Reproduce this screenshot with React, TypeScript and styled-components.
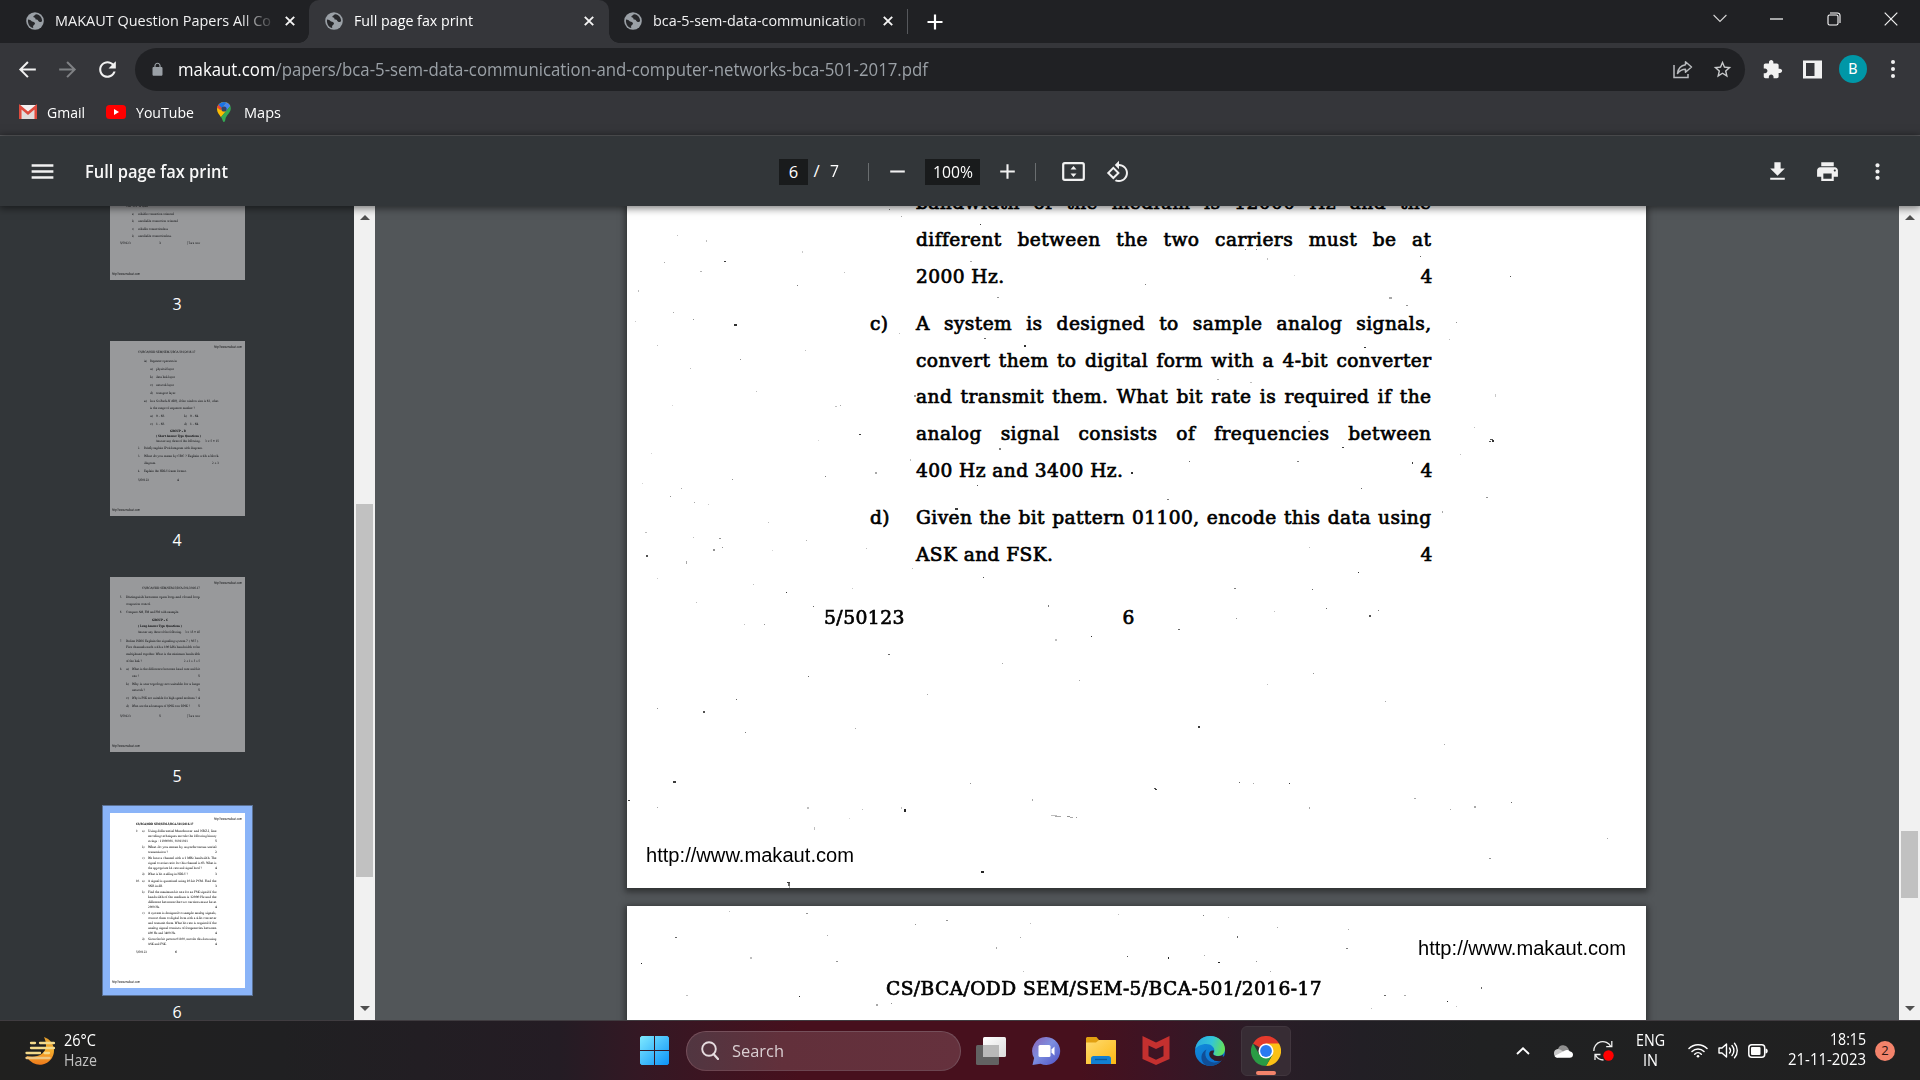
import React, { useLayoutEffect, useRef, useState } from 'react';
import styled, { createGlobalStyle, css } from 'styled-components';

const UI = `"Open Sans", "Noto Sans", sans-serif`;
const BOOK = `"DejaVu Serif", serif`;
const ARIAL = `"Liberation Sans", Arial, sans-serif`;

const Global = createGlobalStyle`
  * { box-sizing: border-box; }
  html, body { margin: 0; padding: 0; background: #202124; overflow: hidden; }
  body { font-family: ${UI}; }
  svg { display: block; flex: none; }
`;

/* ---------- text squeezed or stretched to an exact width ---------- */

const FitBox = styled.span<{ $w: number }>`
  display: block;
  flex: none;
  width: ${(p) => p.$w}px;
  white-space: pre;
`;
const FitInner = styled.span`
  display: inline-block;
  transform-origin: 0 50%;
`;

function Fit({ w, children }: { w: number; children: React.ReactNode }) {
  const ref = useRef<HTMLSpanElement>(null);
  const [scale, setScale] = useState(1);
  useLayoutEffect(() => {
    if (ref.current && ref.current.offsetWidth) {
      const s = getComputedStyle(ref.current).transform;
      const now = s === 'none' ? 1 : new DOMMatrix(s).a;
      setScale(w / (ref.current.getBoundingClientRect().width / now));
    }
  }, [w]);
  return (
    <FitBox $w={w}>
      <FitInner ref={ref} style={{ transform: `scaleX(${scale})` }}>{children}</FitInner>
    </FitBox>
  );
}

/* ---------- window ---------- */

const Screen = styled.div`
  width: 1920px;
  height: 1080px;
  display: flex;
  flex-direction: column;
  overflow: hidden;
  color: #fff;
`;

const TabStrip = styled.div`
  height: 43px;
  background: #202124;
  display: flex;
  flex: none;
  align-items: stretch;
`;
const Tab = styled.div<{ $active?: boolean; $w: number; $pad: number }>`
  width: ${(p) => p.$w}px;
  display: flex;
  align-items: center;
  padding-left: ${(p) => p.$pad}px;
  padding-bottom: 1px;
  font-size: 15px;
  line-height: 24px;
  color: ${(p) => (p.$active ? '#fff' : '#f1f1f2')};
  ${(p) =>
    p.$active &&
    css`
      background: #35363a;
      border-radius: 10px 10px 0 0;
      position: relative;
      &::before, &::after {
        content: '';
        position: absolute;
        bottom: 0;
        width: 10px;
        height: 10px;
      }
      &::before { left: -10px; background: radial-gradient(circle at 0 0, transparent 9.5px, #35363a 10px); }
      &::after { right: -10px; background: radial-gradient(circle at 100% 0, transparent 9.5px, #35363a 10px); }
    `}
`;
const TabText = styled.div<{ $fade?: boolean }>`
  width: 216px;
  margin-left: 11px;
  margin-top: -2px;
  overflow: hidden;
  ${(p) => p.$fade && css`mask-image: linear-gradient(90deg, #000 185px, rgba(0,0,0,0.15) 216px);`}
`;
const TabClose = styled.div`
  margin-left: 14px;
`;
const TabDivider = styled.div`
  width: 1px;
  height: 25px;
  margin: 9px 19px 0 0;
  background: #56585c;
`;
const NewTab = styled.div`
  display: flex;
  align-items: center;
`;
const WindowControls = styled.div`
  margin-left: auto;
  display: flex;
  align-items: center;
  height: 37px;
  gap: 43.5px;
  padding-right: 22px;
`;

const Toolbar = styled.div`
  height: 53px;
  flex: none;
  background: #35363a;
  display: flex;
  align-items: center;
  padding: 0 16px 0 15px;
`;
const NavButtons = styled.div`
  display: flex;
  gap: 15px;
  width: 120px;
  flex: none;
  margin-top: -1px;
`;
const Omnibox = styled.div`
  width: 1610px;
  height: 43px;
  flex: none;
  border-radius: 22px;
  background: #202124;
  display: flex;
  align-items: center;
  padding: 0 12px 0 15px;
  font-size: 17.5px;
  color: #9aa0a6;
`;
const Url = styled.div`
  display: flex;
  margin: -1px 0 0 13px;
  flex: 1;
`;
const Host = styled.span`
  color: #fff;
`;
const OmniActions = styled.div`
  display: flex;
  align-items: center;
  gap: 19px;
`;
const ToolbarRight = styled.div`
  display: flex;
  align-items: center;
  margin-left: 17px;
  margin-top: -1px;
`;
const Avatar = styled.div`
  width: 28px;
  height: 28px;
  border-radius: 50%;
  background: #0097a7;
  display: grid;
  place-items: center;
  font: 15px Roboto, sans-serif;
  margin: 0 24px 0 17px;
`;

const Bookmarks = styled.div`
  height: 40px;
  flex: none;
  background: #35363a;
  border-bottom: 1px solid #5f6063;
  display: flex;
  align-items: center;
  padding: 0 0 7px 18px;
  font-size: 15px;
  line-height: 24px;
`;
const Bookmark = styled.div<{ $gap: number; $next: number }>`
  display: flex;
  align-items: center;
  gap: ${(p) => p.$gap}px;
  margin-right: ${(p) => p.$next}px;
  ${FitBox} { margin-top: -1px; }
`;

/* ---------- PDF viewer ---------- */

const PdfBar = styled.div`
  height: 70px;
  flex: none;
  background: #323639;
  display: flex;
  align-items: center;
  padding: 1px 30px 0 28px;
  font-size: 17px;
  line-height: 26px;
  box-shadow: 0 1px 8px 1px rgba(0, 0, 0, 0.55);
  position: relative;
  z-index: 2;
`;
const PdfTitle = styled.div`
  margin: -1px 0 0 28px;
  font-weight: 600;
  color: #f8f8f8;
  width: 694px;
  font-size: 17.5px;
`;
const Field = styled.div<{ $w: number }>`
  width: ${(p) => p.$w}px;
  height: 26px;
  background: #191b1c;
  display: flex;
  justify-content: center;
  font-size: 16.5px;
  line-height: 25px;
`;
const Slash = styled.div`
  margin: -1px 10.5px 0 5.5px;
`;
const Total = styled.div`
  margin-top: -1px;
`;
const Rule = styled.div<{ $l: number; $r: number }>`
  width: 1px;
  height: 18px;
  background: #6a6e70;
  margin: 0 ${(p) => p.$r}px 0 ${(p) => p.$l}px;
`;
const PdfActions = styled.div`
  display: flex;
  gap: 25px;
  margin-left: auto;
`;
const Spacer = styled.div<{ $w: number }>`
  width: ${(p) => p.$w}px;
  flex: none;
`;

const PdfBody = styled.div`
  height: 814px;
  flex: none;
  display: flex;
  background: #525659;
`;
const Sidebar = styled.div`
  width: 354px;
  background: #323639;
  overflow: hidden;
  display: flex;
  flex-direction: column;
  align-items: center;
`;
const ThumbItem = styled.div`
  display: flex;
  flex-direction: column;
  align-items: center;
  height: 236px;
  flex: none;
  margin-left: 1px;
  &:first-child { margin-top: -109px; }
`;
const ThumbFrame = styled.div<{ $on?: boolean }>`
  width: 151px;
  height: 191px;
  background: ${(p) => (p.$on ? '#8ab4f8' : 'transparent')};
  border: 1px solid ${(p) => (p.$on ? '#5b7193' : 'transparent')};
  padding: 7px;
`;
const Thumb = styled.div<{ $on?: boolean }>`
  width: 135px;
  height: 175px;
  overflow: hidden;
  background: ${(p) => (p.$on ? '#fff' : '#98999b')};
  color: ${(p) => (p.$on ? '#000' : '#111214')};
  font-family: ${BOOK};
`;
const ThumbLabel = styled.div`
  font-size: 16px;
  line-height: 20px;
  margin: 6px 0 0 -1px;
`;
const MiniRow = styled.div<{ $top: number; $bold?: boolean; $sans?: boolean }>`
  display: flex;
  height: 5px;
  margin-top: ${(p) => p.$top}px;
  font-size: ${(p) => (p.$sans ? 2.6 : 3)}px;
  line-height: 5px;
  font-weight: ${(p) => (p.$bold ? 700 : 400)};
  font-family: ${(p) => (p.$sans ? ARIAL : BOOK)};
  -webkit-text-stroke: ${(p) => (p.$sans ? 0 : 0.03)}px currentColor;
`;
const MiniSeg = styled.div<{ $left: number }>`
  margin-left: ${(p) => p.$left}px;
  flex: none;
`;

const Scrollbar = styled.div`
  width: 21px;
  flex: none;
  background: #f1f1f1;
  display: flex;
  flex-direction: column;
  align-items: center;
  justify-content: space-between;
  padding: 9px 0 9px;
`;
const ScrollTrack = styled.div<{ $before: number; $len: number }>`
  flex: 1;
  width: 17px;
  padding-top: ${(p) => p.$before}px;
  &::before {
    content: '';
    display: block;
    height: ${(p) => p.$len}px;
    background: #c1c1c1;
  }
`;
const ScrollArrow = styled.div<{ $down?: boolean }>`
  border: 5px solid transparent;
  border-top-width: ${(p) => (p.$down ? 5 : 0)}px;
  border-bottom-width: ${(p) => (p.$down ? 0 : 5)}px;
  border-${(p) => (p.$down ? 'top' : 'bottom')}-color: #505050;
`;

const Canvas = styled.div`
  width: 1524px;
  overflow: hidden;
  padding-left: 252px;
`;
const PageShadow = styled.div`
  width: 1019px;
  box-shadow: 0 2px 6px 2px rgba(20, 20, 20, 0.55);
  margin-bottom: 18px;
`;
const Page = styled.div<{ $h: number }>`
  position: relative;
  width: 1019px;
  height: ${(p) => p.$h}px;
  background: #fff;
  color: #000;
  overflow: hidden;
`;
const Specks = styled.svg`
  position: absolute;
  left: 0;
  top: 0;
`;
const printed = css`
  font-family: ${BOOK};
  font-size: 18.6px;
  letter-spacing: 0.42px;
  line-height: 36.7px;
  -webkit-text-stroke: 0.7px #000;
`;
const Questions = styled.div`
  ${printed}
  margin: -20.6px 0 0 243px;
  width: 562px;
  display: flex;
  flex-direction: column;
  gap: 10.6px;
`;
const Question = styled.div`
  display: flex;
`;
const Marker = styled.div`
  width: 46px;
  flex: none;
`;
const Lines = styled.div`
  width: 515.5px;
`;
const Line = styled.div<{ $short?: boolean }>`
  height: 36.7px;
  white-space: nowrap;
  ${(p) =>
    p.$short
      ? css`display: flex; justify-content: space-between; margin-right: -1.2px;`
      : css`text-align: justify; text-align-last: justify;`}
`;
const PageFoot = styled.div`
  ${printed}
  margin: 26.3px 0 0 197px;
  display: flex;
  gap: 217.5px;
`;
const PageUrl = styled.div<{ $top: number; $left: number }>`
  margin: ${(p) => p.$top}px 0 0 ${(p) => p.$left}px;
  font: 20px/24px ${ARIAL};
`;
const PageHeading = styled.div`
  ${printed}
  margin: 10.6px 0 0 259px;
`;

/* ---------- taskbar ---------- */

const Taskbar = styled.div`
  height: 60px;
  flex: none;
  display: flex;
  align-items: center;
  border-top: 1px solid #403c40;
  background: linear-gradient(90deg, #20201f 0, #202022 280px, #241c24 560px, #341824 640px, #47101d 800px,
    #47101d 1080px, #3c1424 1160px, #2a1d27 1260px, #221f25 1360px, #202122 1480px, #202020 1920px);
`;
const Weather = styled.div`
  width: 615px;
  margin-left: 25px;
  display: flex;
  align-items: center;
  gap: 9px;
  font-size: 15.5px;
  line-height: 20px;
`;
const WeatherText = styled.div`
  margin-top: -2px;
`;
const Dim = styled.div`
  color: #c2c2c2;
`;
const SearchBox = styled.div`
  width: 275px;
  height: 40px;
  margin: 0 15px 0 17px;
  border-radius: 20px;
  background: linear-gradient(90deg, #513641, #62303b 35%, #65313d);
  border: 1px solid #75505b;
  border-bottom-color: #6c4550;
  display: flex;
  align-items: center;
  gap: 13px;
  padding-left: 14px;
  font-size: 17px;
  color: #dacfd2;
`;
const Apps = styled.div`
  display: flex;
  align-items: center;
  gap: 25.6px;
`;
const ActiveApp = styled.div`
  width: 50px;
  height: 50px;
  margin-left: -10px;
  border-radius: 6px;
  background: #372c34;
  border: 1px solid #41363e;
  display: flex;
  flex-direction: column;
  align-items: center;
  padding-top: 9px;
  gap: 5px;
`;
const ActiveBar = styled.div`
  width: 20px;
  height: 4px;
  flex: none;
  border-radius: 2px;
  background: #f3836b;
`;
const Tray = styled.div`
  margin-left: auto;
  display: flex;
  align-items: center;
  padding-right: 25px;
  font-size: 15.5px;
  line-height: 20px;
`;
const TrayIcon = styled.div<{ $r: number }>`
  margin-right: ${(p) => p.$r}px;
`;
const Language = styled.div`
  width: 30px;
  margin: -1px 23px 0 -1px;
  display: flex;
  flex-direction: column;
  align-items: center;
`;
const Clock = styled.div`
  display: flex;
  flex-direction: column;
  align-items: flex-end;
  margin: -3px 9px 0 20px;
`;
const Badge = styled.div`
  width: 20px;
  height: 20px;
  border-radius: 50%;
  background: #f3836b;
  color: #2b1512;
  font-size: 13px;
  line-height: 18px;
  text-align: center;
`;

/* ---------- icons ---------- */

function Glyph({ d, size = 25, color = '#f1f1f1' }: { d: string; size?: number; color?: string }) {
  return (
    <svg width={size} height={size} viewBox="0 0 24 24" fill={color}><path d={d} /></svg>
  );
}
const P = {
  back: 'M20 11.1H7.4l5.7-5.7L11.7 4 3.8 12l7.9 8 1.4-1.4-5.7-5.7H20z',
  fwd: 'M4 11.1h12.6l-5.7-5.7L12.3 4l7.9 8-7.9 8-1.4-1.4 5.7-5.7H4z',
  reload: 'M17.65 6.35C16.2 4.9 14.21 4 12 4c-4.42 0-7.99 3.58-7.99 8s3.57 8 7.99 8c3.73 0 6.84-2.55 7.73-6h-2.08c-.82 2.33-3.04 4-5.65 4-3.31 0-6-2.69-6-6s2.69-6 6-6c1.66 0 3.14.69 4.22 1.78L13 11h7V4l-2.35 2.35z',
  lock: 'M18 8h-1V6c0-2.76-2.24-5-5-5S7 3.24 7 6v2H6c-1.1 0-2 .9-2 2v10c0 1.1.9 2 2 2h12c1.1 0 2-.9 2-2V10c0-1.1-.9-2-2-2zM8.9 6c0-1.71 1.39-3.1 3.1-3.1s3.1 1.39 3.1 3.1v2H8.9V6z',
  star: 'M22 9.24l-7.19-.62L12 2 9.19 8.63 2 9.24l5.46 4.73L5.82 21 12 17.27 18.18 21l-1.63-7.03L22 9.24zM12 15.4l-3.76 2.27 1-4.28-3.32-2.88 4.38-.38L12 6.1l1.71 4.04 4.38.38-3.32 2.88 1 4.28L12 15.4z',
  puzzle: 'M20.5 11H19V7c0-1.1-.9-2-2-2h-4V3.5C13 2.12 11.88 1 10.5 1S8 2.12 8 3.5V5H4c-1.1 0-1.99.9-1.99 2v3.8H3.5c1.49 0 2.7 1.21 2.7 2.7s-1.21 2.7-2.7 2.7H2V20c0 1.1.9 2 2 2h3.8v-1.5c0-1.49 1.21-2.7 2.7-2.7 1.49 0 2.7 1.21 2.7 2.7V22H17c1.1 0 2-.9 2-2v-4h1.5c1.38 0 2.5-1.12 2.5-2.5S21.88 11 20.5 11z',
  dots: 'M12 8c1.1 0 2-.9 2-2s-.9-2-2-2-2 .9-2 2 .9 2 2 2zm0 2c-1.1 0-2 .9-2 2s.9 2 2 2 2-.9 2-2-.9-2-2-2zm0 6c-1.1 0-2 .9-2 2s.9 2 2 2 2-.9 2-2-.9-2-2-2z',
  menu: 'M3 18h18v-2H3v2zm0-5h18v-2H3v2zm0-7v2h18V6H3z',
  download: 'M5 20h14v-2H5v2zM19 9h-4V3H9v6H5l7 7 7-7z',
  print: 'M19 8H5c-1.66 0-3 1.34-3 3v6h4v4h12v-4h4v-6c0-1.66-1.34-3-3-3zm-3 11H8v-5h8v5zm3-7c-.55 0-1-.45-1-1s.45-1 1-1 1 .45 1 1-.45 1-1 1zm-1-9H6v4h12V3z',
  add: 'M19 13h-6v6h-2v-6H5v-2h6V5h2v6h6v2z',
  remove: 'M19 13H5v-2h14v2z',
  rotate: 'M7.34 6.41L.86 12.9l6.49 6.48 6.49-6.48-6.5-6.49zM3.69 12.9l3.66-3.66L11 12.9l-3.66 3.66-3.65-3.66zm15.67-6.26C17.61 4.88 15.3 4 13 4V.76L8.76 5 13 9.24V6c1.79 0 3.58.68 4.95 2.05 2.73 2.73 2.73 7.17 0 9.9C16.58 19.32 14.79 20 13 20c-.97 0-1.94-.21-2.84-.61l-1.49 1.49C10.02 21.62 11.51 22 13 22c2.3 0 4.61-.88 6.36-2.64 3.52-3.51 3.52-9.21 0-12.72z',
};

const Globe = () => (
  <svg width="18" height="18" viewBox="0 0 18 18">
    <circle cx="9" cy="9" r="8.8" fill="#9aa0a6" />
    <path d="M10.5 2.2c-1.5.3-1.8 1.3-3 1.9-.3 1 .2 1.5 1.6 1.6l.6 1.8c1.4.2 2.3.2 2.6 1.5l1.3 1c1.3.2 2.3-.2 2.500-1.300-.1-3-2.200-5.900-5.600-6.500zM2 7.400c1.700.1 3 .7 4 2 1.800.1 2.900.9 3 2.200-.4 1.500-1.800 1.600-2 3.100l.3 1.300C4.300 15.600 1.400 12 2 7.400z" fill="#26272a" />
  </svg>
);
const Cross = ({ s = 10 }: { s?: number }) => (
  <svg width={s} height={s} viewBox="0 0 10 10"><path d="M.8.8l8.4 8.4M9.2.8L.8 9.2" stroke="#f4f4f4" strokeWidth="1.9" /></svg>
);
const Gmail = () => (
  <svg width="20" height="16" viewBox="0 0 20 16">
    <rect x="1" y="1" width="18" height="14" rx="1.5" fill="#f4f1f1" />
    <path d="M4 15V5l6 5 6-5v10z" fill="#e1dcdc" />
    <path d="M2.3 15V2.8L10 9.2l7.7-6.4V15" fill="none" stroke="#dd4b3e" strokeWidth="2.6" />
  </svg>
);
const YouTube = () => (
  <svg width="20" height="14" viewBox="0 0 20 14"><rect width="20" height="14" rx="3.5" fill="#f00" /><path d="M8 4v6l5-3z" fill="#fff" /></svg>
);
const Maps = () => (
  <svg width="14" height="20" viewBox="0 0 14 20">
    <path d="M7 0a7 7 0 0 1 6.3 4L4 15.3C2.3 12.5 0 10.5 0 7a7 7 0 0 1 7-7z" fill="#fbbc04" />
    <path d="M2.2 2A7 7 0 0 1 7 0c1 0 2 .2 2.8.6L4.7 6.5 1 3.4z" fill="#1a73e8" />
    <path d="M1.4 2.8A7 7 0 0 0 .2 5.5l3.2 2.7L5 6z" fill="#ea4335" />
    <path d="M9.8.6a7 7 0 0 1 3.5 3.4L9 9 6.5 4.6z" fill="#4285f4" />
    <path d="M13.3 4c2 5-2.6 7.5-4.4 11.5-.6 1.5-.6 4.5-1.9 4.5s-1.3-2.6-3-5z" fill="#34a853" />
    <circle cx="7" cy="7" r="2.6" fill="#31456b" />
  </svg>
);
const WindowIcons = () => (
  <WindowControls>
    <svg width="14" height="9" viewBox="0 0 14 9"><path d="M.6 1l6.4 6.5L13.4 1" fill="none" stroke="#d6d6d6" strokeWidth="1.1" /></svg>
    <svg width="13" height="2" viewBox="0 0 13 2"><path d="M0 1h13" stroke="#fff" strokeWidth="1.2" /></svg>
    <svg width="14" height="14" viewBox="0 0 14 14" fill="none" stroke="#fff" strokeWidth="1.1">
      <rect x="1" y="3" width="10" height="10" rx="1.6" /><path d="M3 1h7.5A2.5 2.5 0 0 1 13 3.5V11" />
    </svg>
    <svg width="14" height="14" viewBox="0 0 14 14"><path d="M.7.7l12.6 12.6M13.3.7L.7 13.3" stroke="#f2f2f2" strokeWidth="1.2" /></svg>
  </WindowControls>
);
const Share = () => (
  <svg width="20" height="19" viewBox="0 0 20 19" fill="none" stroke="#b9bbbe" strokeWidth="1.5">
    <path d="M1 5v12.5h14V14" /><path d="M12.5 1.8L18.5 7l-6 5.2V9.3c-3.5 0-5.8 1.2-8 4.2.6-4.8 3.5-8 8-8.7z" strokeLinejoin="round" />
  </svg>
);
const SidePanel = () => (
  <svg width="19" height="19" viewBox="0 0 19 19"><path fillRule="evenodd" d="M0 .5h19v18H0zM3 3v13h8.5V3z" fill="#f1f1f1" /></svg>
);
const FitPage = () => (
  <svg width="23" height="19" viewBox="0 0 23 19">
    <rect x="1.2" y="1.2" width="20.6" height="16.6" rx="1.5" fill="none" stroke="#f1f1f1" strokeWidth="2.2" />
    <path d="M8.5 7.6h6L11.5 4zM8.5 11.4h6l-3 3.6z" fill="#f1f1f1" />
  </svg>
);
const Moon = () => (
  <svg width="30" height="28" viewBox="0 0 30 28">
    <defs><linearGradient id="moon" x1="0" y1="0" x2="0" y2="1"><stop offset="0" stopColor="#e09b2d" /><stop offset=".5" stopColor="#f5ac2c" /><stop offset="1" stopColor="#ee7a1c" /></linearGradient></defs>
    <path d="M19 0c6 2 10 7.5 10 13.5A14.3 14.3 0 0 1 1.5 19c9 2.5 19-1 19.5-10 0-3.5-.6-6-2-9z" fill="url(#moon)" />
    <g stroke="#f3d98a" strokeWidth="2.3" strokeLinecap="round">
      <path d="M6 6h4M15 6h14M6 11h23M1.5 16H15M19.5 16H24" /><path d="M1.5 21h23" stroke="#eec782" />
    </g>
  </svg>
);
const WindowsLogo = () => (
  <svg width="29" height="29" viewBox="0 0 29 29">
    <defs><linearGradient id="win" x1="0" y1="0" x2="1" y2="1"><stop offset="0" stopColor="#7feaff" /><stop offset="1" stopColor="#0c93f7" /></linearGradient></defs>
    <path d="M1.5 0H14v14H0V1.5zM15 0h12.5L29 1.5V14H15zM0 15h14v14H1.5L0 27.5zM15 15h14v12.5L27.5 29H15z" fill="url(#win)" />
  </svg>
);
const TaskView = () => (
  <svg width="30" height="28" viewBox="0 0 30 28">
    <defs><linearGradient id="tvw" x1="0" y1="0" x2="1" y2="1"><stop offset="0" stopColor="#fff" /><stop offset="1" stopColor="#dcdcdc" /></linearGradient></defs>
    <rect y="8" width="23" height="20" rx="1.5" fill="#626262" /><rect x="7" width="23" height="20" rx="1.5" fill="url(#tvw)" /><path d="M7 8h16v12H7z" fill="#b9b9b9" />
  </svg>
);
const Chat = () => (
  <svg width="29" height="28" viewBox="0 0 29 28">
    <defs><linearGradient id="cht" x1="0" y1="0" x2="1" y2="1"><stop offset="0" stopColor="#8a5fb4" /><stop offset=".45" stopColor="#7d8fe0" /><stop offset="1" stopColor="#4d4fc4" /></linearGradient></defs>
    <path d="M14.5 0a14 14 0 1 1-6 26.8L.5 28l1.6-7A14 14 0 0 1 14.5 0z" fill="url(#cht)" />
    <rect x="6.5" y="8" width="12" height="12" rx="1.5" fill="#fff" /><path d="M19.5 12.5l3-3v9l-3-3z" fill="#fff" />
  </svg>
);
const Explorer = () => (
  <svg width="30" height="27" viewBox="0 0 30 27">
    <defs><linearGradient id="fld" x1="0" y1="0" x2="1" y2="1"><stop offset="0" stopColor="#ffdb70" /><stop offset="1" stopColor="#fcb813" /></linearGradient></defs>
    <path d="M1 0h9.5L13 3v5H0V1z" fill="#e2a011" /><path d="M0 5.5h10L13 3h16.5l.5.5V27H0z" fill="url(#fld)" />
    <path d="M5 27v-5.5c0-1.5 1-2.5 2.5-2.5h15c1.5 0 2.5 1 2.5 2.5V27z" fill="#1280d2" /><path d="M9 22.5h12" stroke="#0a5a9c" strokeWidth="1.3" />
  </svg>
);
const McAfee = () => (
  <svg width="28" height="29" viewBox="0 0 28 29"><path d="M.5 0L14 6.5 27.5 0v23L14 29 .5 23zM6.5 9.5v10.8l7.5 3.4 7.5-3.4V9.5l-7.5 3.6z" fill="#c4302f" fillRule="evenodd" /></svg>
);
const Edge = () => (
  <svg width="30" height="30" viewBox="0 0 30 30">
    <defs>
      <linearGradient id="edg" x1="0" y1=".2" x2="1" y2=".4"><stop offset="0" stopColor="#2aa9e0" /><stop offset=".55" stopColor="#33c5d8" /><stop offset="1" stopColor="#63e05a" /></linearGradient>
      <linearGradient id="edb" x1="0" y1="0" x2=".6" y2="1"><stop offset="0" stopColor="#1292dc" /><stop offset="1" stopColor="#0c6fd0" /></linearGradient>
    </defs>
    <circle cx="15" cy="15" r="15" fill="url(#edb)" />
    <path d="M19 20.5h11.5v5l-3-1.2-3 1.2-5.5-1z" fill="#331b27" />
    <path d="M.3 13C1.5 5 7.5 0 15 0c8.5 0 15 6 15 13 0 4-2.8 7-7 7-3 0-5-1-4.5-2.2.6-1 .9-1.8.9-3 0-4-3.7-6.8-8-6.8C6 8 2 10.5.3 13z" fill="url(#edg)" />
    <path d="M11.5 13.5c-3 5 0 12.5 7.5 13 3 .2 5.5-.8 7.5-2A15 15 0 0 1 15 30C9 30 6 25 6.5 20.5c.3-3 2-5.5 5-7z" fill="#104e97" />
    <path d="M19 14.5c0 1.7-1 2.5-.8 3.5.3 1.3 2.3 2.2 5 2.2 2 0 3.8-.6 5-1.7-.4 3-3 6-6.5 6-4 0-7.5-3-7.5-6.5 0-2 1.5-4 4.8-3.5z" fill="#331b27" />
  </svg>
);
const Chrome = () => (
  <svg width="30" height="30" viewBox="0 0 30 30">
    <path d="M15 15L2 7.5a15 15 0 0 1 26 0z" fill="#e53a2c" />
    <path d="M15 15V7.5h13A15 15 0 0 1 15 30l6.5-11.2z" fill="#fbc116" />
    <path d="M15 15l6.5 3.7L15 30A15 15 0 0 1 2 7.5l6.5 11.2z" fill="#2a9c45" />
    <circle cx="15" cy="15" r="7.5" fill="#fff" /><circle cx="15" cy="15" r="5.9" fill="#2a7af0" />
  </svg>
);
const Magnifier = () => (
  <svg width="18" height="19" viewBox="0 0 18 19" fill="none" stroke="#e6dcdf"><circle cx="8" cy="8" r="6.8" strokeWidth="1.9" /><path d="M12.5 13l4.5 5" strokeWidth="2.2" strokeLinecap="round" /></svg>
);
const TrayChevron = () => (
  <svg width="14" height="8" viewBox="0 0 14 8"><path d="M1 7l6-5.7L13 7" fill="none" stroke="#fff" strokeWidth="1.9" /></svg>
);
const Cloud = () => (
  <svg width="20" height="14" viewBox="0 0 20 14">
    <path d="M5 5a5.5 5.5 0 0 1 10-1l2 4H4z" fill="#8f8f8f" /><path d="M4.5 13.5a4.3 4.3 0 0 1 .3-8.5C8 5 10 8 13 9z" fill="#c9c9c9" />
    <path d="M4 13.8C2.5 13.5 2 12.8 1.5 12L12 6.5c1-.6 3-.8 4.5.7 2.5.5 3.5 2 3.5 3.4a3.3 3.3 0 0 1-3.3 3.2z" fill="#fff" />
  </svg>
);
const Sync = () => (
  <svg width="21" height="21" viewBox="0 0 21 21" fill="none" stroke="#f0f0f0" strokeWidth="1.3">
    <path d="M.8 11a9 9 0 0 1 17-4.5M18.8 1v5.6h-5.6" /><path d="M2 20v-5.5h5.5M2.5 15a9 9 0 0 0 8 5" /><circle cx="15.5" cy="15.5" r="5.2" fill="#f00" stroke="none" />
  </svg>
);
const Wifi = () => (
  <svg width="20" height="15" viewBox="0 0 20 15" fill="none" stroke="#fff" strokeWidth="1.5" strokeLinecap="round">
    <path d="M1 5.5a12.5 12.5 0 0 1 18 0M4 8.5a8.5 8.5 0 0 1 12 0M6.7 11.2a4.7 4.7 0 0 1 6.6 0" /><circle cx="10" cy="13.2" r="1.3" fill="#fff" stroke="none" />
  </svg>
);
const Volume = () => (
  <svg width="20" height="17" viewBox="0 0 20 17" fill="none" stroke="#fff" strokeWidth="1.4" strokeLinecap="round" strokeLinejoin="round">
    <path d="M1 6v5h3l4.5 4V2L4 6zM11.5 6a4 4 0 0 1 0 5M14 3.5a7.5 7.5 0 0 1 0 10M16.5 1.2a11 11 0 0 1 0 14.6" />
  </svg>
);
const Battery = () => (
  <svg width="20" height="14" viewBox="0 0 20 14">
    <rect x=".8" y=".8" width="15.9" height="12.4" rx="3" fill="none" stroke="#fff" strokeWidth="1.5" /><rect x="3" y="3" width="9.5" height="8" rx="1" fill="#fff" /><path d="M17.5 4.5c3 .3 3 4.7 0 5z" fill="#fff" />
  </svg>
);

/* ---------- page thumbnails: rows of [left, width, text] ---------- */

type Seg = [number, number, string];
type Row = { y: number; s: Seg[]; bold?: boolean; sans?: boolean };
const HEAD = 'CS/BCA/ODD SEM/SEM-5/BCA-501/2016-17';
const SITE = 'http://www.makaut.com';
const siteTop: Row = { y: 6, s: [[104, 28, SITE]], sans: true };
const siteEnd: Row = { y: 170, s: [[2, 28, SITE]], sans: true };

const thumbs: Record<number, Row[]> = {
  3: [
    { y: 101.7, s: [[16, 22, 'The TCP is a/an']] },
    { y: 109.3, s: [[22, 2, 'a)'], [28, 36, 'reliable connection oriented']] },
    { y: 116.7, s: [[22, 2, 'b)'], [28, 40, 'unreliable connection oriented']] },
    { y: 124.3, s: [[22, 2, 'c)'], [28, 30, 'reliable connectionless']] },
    { y: 132, s: [[22, 2, 'd)'], [28, 34, 'unreliable connectionless.']] },
    { y: 139, s: [[10, 10.5, '5/50123'], [49, 2, '3'], [77, 13, '[ Turn over']] },
    siteEnd,
  ],
  4: [
    siteTop,
    { y: 11, s: [[28, 57.5, HEAD]] },
    { y: 20.3, s: [[34, 3, 'ix)'], [40, 27, 'Repeater operates in']] },
    { y: 28.3, s: [[40, 3, 'a)'], [46, 18, 'physical layer']] },
    { y: 36.3, s: [[40, 3, 'b)'], [46, 19, 'data link layer']] },
    { y: 44.3, s: [[40, 3, 'c)'], [46, 18, 'network layer']] },
    { y: 52.3, s: [[40, 3, 'd)'], [46, 20, 'transport layer.']] },
    { y: 60.3, s: [[34, 3, 'x)'], [40, 68.5, 'In a Go-Back-N ARQ, if the window size is 63, what']] },
    { y: 67.3, s: [[40, 45, 'is the range of sequence number ?']] },
    { y: 75.3, s: [[40, 3, 'a)'], [46, 8.5, '0 - 63'], [74, 3, 'b)'], [80, 8.5, '0 - 64']] },
    { y: 83.3, s: [[40, 3, 'c)'], [46, 8.5, '1 - 63'], [74, 3, 'd)'], [80, 8.5, '1 - 64']] },
    { y: 90.3, s: [[60, 16, 'GROUP – B']], bold: true },
    { y: 95.3, s: [[46, 45, '( Short Answer Type Questions )']], bold: true },
    { y: 100.3, s: [[46, 44.5, 'Answer any three of the following.'], [95, 14, '3 × 5 = 15']] },
    { y: 108, s: [[28, 2, '2.'], [34, 58.5, 'Briefly explain IPv4 datagram with diagram.']] },
    { y: 116, s: [[28, 2, '3.'], [34, 74.5, 'What do you mean by CRC ? Explain with a block']] },
    { y: 122.7, s: [[34, 12, 'diagram.'], [102, 7, '2 + 3']] },
    { y: 130.7, s: [[28, 2, '4.'], [34, 42.5, 'Explain the HDLC frame format.']] },
    { y: 139.3, s: [[28, 11, '5/50123'], [67, 2, '4']] },
    siteEnd,
  ],
  5: [
    siteTop,
    { y: 11.3, s: [[32, 58, HEAD]] },
    { y: 21, s: [[10, 2, '5.'], [16, 74, 'Distinguish between open loop and closed loop']] },
    { y: 27.7, s: [[16, 25, 'congestion control.']] },
    { y: 35.7, s: [[10, 2, '6.'], [16, 53, 'Compare AM, FM and PM with example.']] },
    { y: 44, s: [[42, 16, 'GROUP – C']], bold: true },
    { y: 50, s: [[28, 44, '( Long Answer Type Questions )']], bold: true },
    { y: 56, s: [[28, 44, 'Answer any three of the following.'], [75, 15, '3 × 15 = 45']] },
    { y: 64.3, s: [[10, 2, '7.'], [16, 73, 'Define ISDN. Explain the signaling system 7 ( SS7 ).']] },
    { y: 71, s: [[16, 74, 'Five channels each with a 100 kHz bandwidth to be']] },
    { y: 78, s: [[16, 74, 'multiplexed together. What is the minimum bandwidth']] },
    { y: 84.7, s: [[16, 16, 'of the link ?'], [74, 16, '2 + 3 + 5 + 5']] },
    { y: 92.7, s: [[10, 2, '8.'], [16, 3, 'a)'], [22, 68, 'What is the difference between baud rate and bit']] },
    { y: 99.3, s: [[22, 7, 'rate ?'], [88, 2, '5']] },
    { y: 107.3, s: [[16, 3, 'b)'], [22, 68, 'Why is star topology not suitable for a large']] },
    { y: 114, s: [[22, 13, 'network ?'], [88, 2, '5']] },
    { y: 122, s: [[16, 3, 'c)'], [22, 65, 'Why is FSK not suitable for high speed modems ?'], [88, 2, '4']] },
    { y: 130, s: [[16, 3, 'd)'], [22, 58, 'What are the advantages of QPSK over BPSK ?'], [88, 2, '5']] },
    { y: 140, s: [[10, 10.5, '5/50123'], [49, 2, '5'], [77, 13, '[ Turn over']] },
    siteEnd,
  ],
  6: [
    siteTop,
    { y: 11, s: [[26, 57.5, HEAD]], bold: true },
    { y: 18.7, s: [[26, 2, '9.'], [32, 2.5, 'a)'], [38, 68.5, 'Using differential Manchester and NRZ-I, line']] },
    { y: 23.7, s: [[38, 68.5, 'encoding techniques encode the following binary']] },
    { y: 28.7, s: [[38, 40, 'strings : 11000001, 01011011'], [105, 2, '5']] },
    { y: 34.7, s: [[32, 2.5, 'b)'], [38, 68.5, 'What do you mean by asynchronous serial']] },
    { y: 39.7, s: [[38, 20, 'transmission ?'], [105, 2, '2']] },
    { y: 46, s: [[32, 2.5, 'c)'], [38, 68.5, 'We have a channel with a 1 MHz bandwidth. The']] },
    { y: 51, s: [[38, 68.5, 'signal to noise ratio for this channel is 63. What is']] },
    { y: 56, s: [[38, 54, 'the appropriate bit rate and signal level ?'], [105, 2, '4']] },
    { y: 62, s: [[32, 2.5, 'd)'], [38, 40, 'What is bit stuffing in HDLC ?'], [105, 2, '3']] },
    { y: 68.3, s: [[26, 4, '10.'], [32, 2.5, 'a)'], [38, 68.5, 'A signal is quantized using 10-bit PCM. Find the']] },
    { y: 73.3, s: [[38, 15, 'SNR in dB.'], [105, 2, '3']] },
    { y: 79.3, s: [[32, 2.5, 'b)'], [38, 68.5, 'Find the maximum bit rate for an FSK signal if the']] },
    { y: 84.3, s: [[38, 68.5, 'bandwidth of the medium is 12000 Hz and the']] },
    { y: 89.3, s: [[38, 68.5, 'different between the two carriers must be at']] },
    { y: 94.3, s: [[38, 12, '2000 Hz.'], [105, 2, '4']] },
    { y: 100.3, s: [[32, 2.5, 'c)'], [38, 68.5, 'A system is designed to sample analog signals,']] },
    { y: 105.3, s: [[38, 68.5, 'convert them to digital form with a 4-bit converter']] },
    { y: 110.3, s: [[38, 68.5, 'and transmit them. What bit rate is required if the']] },
    { y: 115.3, s: [[38, 68.5, 'analog signal consists of frequencies between']] },
    { y: 120.3, s: [[38, 28, '400 Hz and 3400 Hz.'], [105, 2, '4']] },
    { y: 126.3, s: [[32, 2.5, 'd)'], [38, 68.5, 'Given the bit pattern 01100, encode this data using']] },
    { y: 131.3, s: [[38, 18.5, 'ASK and FSK.'], [105, 2, '4']] },
    { y: 139.7, s: [[26, 11, '5/50123'], [65, 2, '6']] },
    siteEnd,
  ],
};

function ThumbPage({ n, on }: { n: number; on?: boolean }) {
  let bottom = 0;
  return (
    <ThumbItem>
      <ThumbFrame $on={on}>
        <Thumb $on={on}>
          {thumbs[n].map((r, i) => {
            const top = r.y - 2.5 - bottom;
            bottom = r.y + 2.5;
            let end = 0;
            return (
              <MiniRow key={i} $top={top} $bold={r.bold} $sans={r.sans}>
                {r.s.map(([x, w, t], j) => {
                  const left = x - end;
                  end = x + w;
                  return <MiniSeg key={j} $left={left}><Fit w={w}>{t}</Fit></MiniSeg>;
                })}
              </MiniRow>
            );
          })}
        </Thumb>
      </ThumbFrame>
      <ThumbLabel>{n}</ThumbLabel>
    </ThumbItem>
  );
}

/* ---------- scan dust: x, y, width, height, darkness ---------- */

type Dust = [number, number, number, number, number];
const dust6: Dust[] = [
  [97, 55, 2, 1, 0.9], [107, 118, 3, 2, 0.95], [50, 29, 1, 1, 0.3], [79, 34, 1, 2, 0.3], [37, 56, 1, 1, 0.4], [73, 65, 2, 1, 0.35],
  [11, 84, 1, 2, 0.3], [46, 106, 1, 1, 0.4], [66, 113, 1, 1, 0.5], [8, 115, 1, 1, 0.25], [170, 79, 1, 1, 0.6], [175, 45, 1, 2, 0.25],
  [217, 66, 1, 1, 0.3], [274, 10, 1, 1, 0.4], [262, 3, 1, 1, 0.6], [353, 18, 1, 1, 0.9], [343, 55, 2, 1, 0.4], [518, 78, 1, 1, 0.6],
  [370, 91, 2, 1, 0.5], [357, 132, 2, 1, 0.7], [397, 139, 2, 2, 0.95], [272, 127, 1, 1, 0.3], [178, 144, 1, 1, 0.3], [113, 153, 1, 1, 0.5],
  [63, 162, 1, 1, 0.3], [30, 139, 1, 1, 0.3], [129, 185, 1, 1, 0.3], [45, 199, 1, 1, 0.2], [213, 199, 1, 1, 0.4], [208, 200, 2, 1, 0.3],
  [287, 189, 2, 2, 0.5], [232, 228, 2, 1, 0.9], [191, 234, 1, 1, 0.2], [283, 253, 1, 2, 0.3], [372, 242, 2, 2, 0.6], [24, 247, 1, 1, 0.2],
  [198, 270, 1, 1, 0.6], [248, 266, 2, 2, 0.4], [105, 273, 1, 1, 0.5], [15, 277, 1, 1, 0.2], [54, 282, 1, 1, 0.4], [43, 290, 1, 1, 0.5],
  [504, 266, 2, 2, 0.95], [350, 279, 1, 1, 0.8], [540, 293, 2, 1, 0.6], [67, 296, 1, 1, 0.4], [81, 298, 1, 1, 0.25], [328, 302, 3, 2, 0.9],
  [141, 316, 1, 1, 0.3], [18, 326, 2, 1, 0.3], [19, 349, 2, 2, 0.8], [92, 332, 2, 1, 0.5], [86, 343, 2, 2, 0.5], [95, 341, 1, 1, 0.5],
  [59, 355, 1, 3, 0.4], [66, 331, 1, 1, 0.3], [179, 334, 1, 1, 0.35], [145, 344, 1, 1, 0.2], [239, 342, 1, 1, 0.3], [30, 372, 1, 1, 0.25],
  [285, 362, 1, 1, 0.3], [356, 371, 1, 1, 0.8], [126, 378, 1, 1, 0.3], [159, 386, 1, 1, 0.9], [225, 382, 1, 1, 0.25], [421, 399, 1, 2, 0.6],
  [69, 396, 1, 1, 0.3], [186, 400, 1, 1, 0.7], [137, 418, 1, 1, 0.5], [117, 418, 1, 1, 0.3], [464, 430, 1, 1, 0.95], [428, 433, 2, 2, 0.3],
  [883, 70, 1, 1, 0.8], [793, 50, 1, 1, 0.7], [762, 91, 3, 2, 0.4], [779, 99, 2, 1, 0.5], [829, 116, 1, 1, 0.5], [737, 141, 2, 1, 0.95],
  [822, 133, 1, 1, 0.3], [868, 188, 1, 3, 0.25], [863, 233, 3, 1, 0.8], [862, 235, 2, 1, 0.8], [865, 234, 2, 2, 0.95], [715, 241, 2, 1, 0.9], [847, 221, 1, 1, 0.3],
  [833, 248, 1, 1, 0.3], [785, 256, 1, 2, 0.9], [670, 255, 2, 1, 0.6], [562, 255, 1, 1, 0.7], [734, 282, 1, 1, 0.7], [859, 291, 2, 1, 0.5],
  [815, 305, 1, 2, 0.4], [731, 366, 1, 1, 0.95], [607, 382, 2, 1, 0.6], [685, 383, 1, 1, 0.7], [699, 402, 1, 1, 0.7], [742, 409, 2, 2, 0.8],
  [751, 404, 1, 1, 0.6], [609, 412, 1, 1, 0.5], [551, 423, 2, 1, 0.7], [647, 405, 1, 1, 0.3], [682, 341, 1, 1, 0.3], [590, 173, 2, 1, 0.4],
  [623, 176, 2, 1, 0.3], [681, 215, 2, 1, 0.4], [618, 43, 1, 1, 0.6], [629, 43, 1, 1, 0.6], [640, 52, 1, 2, 0.3], [667, 69, 1, 1, 0.2],
  [76, 505, 2, 2, 0.8], [571, 520, 2, 2, 0.9], [46, 575, 3, 2, 0.9], [109, 493, 1, 1, 0.7], [261, 448, 2, 1, 0.7], [181, 470, 1, 1, 0.7],
  [30, 502, 1, 1, 0.5], [118, 526, 1, 1, 0.6], [228, 522, 1, 1, 0.4], [452, 474, 1, 1, 0.4], [375, 457, 1, 1, 0.4], [686, 467, 1, 1, 0.5],
  [817, 538, 1, 1, 0.4], [527, 582, 2, 1, 0.8], [612, 576, 1, 1, 0.7], [300, 488, 1, 1, 0.4], [758, 495, 1, 1, 0.4], [640, 478, 1, 1, 0.3],
  [1, 594, 2, 1, 0.9], [30, 601, 1, 1, 0.4], [180, 601, 2, 2, 0.3], [277, 603, 2, 3, 1], [274, 601, 1, 2, 0.3], [235, 603, 1, 1, 0.3],
  [222, 612, 1, 1, 0.2], [187, 621, 1, 3, 0.3], [343, 577, 1, 1, 0.5], [405, 593, 1, 2, 0.4], [354, 665, 3, 2, 1], [160, 676, 3, 1, 0.9],
  [161, 677, 2, 3, 0.7], [162, 680, 1, 2, 0.4], [424, 609, 6, 1, 0.3], [428, 610, 6, 1, 0.4], [440, 610, 3, 1, 0.5], [443, 611, 3, 1, 0.4],
  [449, 611, 1, 1, 0.5], [528, 583, 2, 1, 0.9], [662, 577, 1, 1, 0.9], [626, 577, 1, 1, 0.4], [682, 601, 1, 2, 0.4], [787, 592, 2, 1, 0.4],
  [823, 603, 1, 1, 0.4], [847, 600, 2, 2, 0.4], [884, 596, 1, 1, 0.7], [862, 652, 2, 1, 0.5], [980, 632, 1, 1, 0.4],
];
const dust7: Dust[] = [
  [179, 7, 2, 1, 0.5], [102, 5, 1, 1, 0.3], [48, 31, 2, 1, 0.7], [14, 57, 1, 1, 1], [123, 51, 2, 2, 0.3], [209, 55, 2, 1, 0.5],
  [172, 90, 1, 1, 1], [200, 29, 1, 1, 0.4], [288, 18, 1, 1, 0.5], [319, 14, 2, 1, 0.5], [249, 98, 2, 2, 0.4], [264, 97, 1, 1, 0.5],
  [369, 41, 1, 2, 0.4], [393, 31, 1, 1, 0.4], [500, 50, 1, 1, 0.8], [403, 17, 1, 1, 0.3], [59, 89, 2, 1, 0.3], [491, 8, 1, 1, 0.3],
  [396, 65, 1, 1, 0.3], [576, 9, 1, 1, 0.6], [601, 11, 1, 1, 0.3], [650, 21, 1, 1, 0.4], [610, 30, 1, 2, 0.7], [541, 51, 1, 2, 1],
  [591, 56, 2, 1, 1], [577, 49, 1, 1, 0.4], [643, 65, 1, 1, 0.4], [629, 55, 1, 1, 0.5], [719, 42, 2, 1, 0.6], [721, 23, 1, 1, 0.4],
  [854, 81, 1, 2, 0.7], [757, 89, 2, 1, 0.7], [777, 89, 2, 1, 0.4], [820, 95, 1, 1, 1], [829, 100, 1, 1, 0.3], [744, 102, 1, 1, 0.3],
];

const DustLayer = ({ items, h }: { items: Dust[]; h: number }) => (
  <Specks width={1019} height={h}>
    {items.map(([x, y, w, hh, a], i) => <rect key={i} x={x} y={y} width={w} height={hh} opacity={a * 0.85} />)}
  </Specks>
);

const Scroll = ({ before, len }: { before: number; len: number }) => (
  <Scrollbar>
    <ScrollArrow />
    <ScrollTrack $before={before} $len={len} />
    <ScrollArrow $down />
  </Scrollbar>
);

type Item = { mark?: string; lines: string[]; last: string };
const items: Item[] = [
  {
    lines: ['bandwidth of the medium is 12000 Hz and the', 'different between the two carriers must be at'],
    last: '2000 Hz.',
  },
  {
    mark: 'c)',
    lines: [
      'A system is designed to sample analog signals,',
      'convert them to digital form with a 4-bit converter',
      'and transmit them. What bit rate is required if the',
      'analog signal consists of frequencies between',
    ],
    last: '400 Hz and 3400 Hz.',
  },
  { mark: 'd)', lines: ['Given the bit pattern 01100, encode this data using'], last: 'ASK and FSK.' },
];

export default function App() {
  return (
    <Screen>
      <Global />
      <TabStrip>
        <Tab $w={309} $pad={26}>
          <Globe /><TabText $fade><Fit w={216}>MAKAUT Question Papers All Co</Fit></TabText><TabClose><Cross /></TabClose>
        </Tab>
        <Tab $w={300} $pad={16} $active>
          <Globe /><TabText><Fit w={119}>Full page fax print</Fit></TabText><TabClose><Cross /></TabClose>
        </Tab>
        <Tab $w={298} $pad={15}>
          <Globe /><TabText $fade><Fit w={213}>bca-5-sem-data-communication</Fit></TabText><TabClose><Cross /></TabClose>
        </Tab>
        <TabDivider />
        <NewTab>
          <svg width="16" height="16" viewBox="0 0 16 16"><path d="M8 .5v15M.5 8h15" stroke="#fff" strokeWidth="2.2" /></svg>
        </NewTab>
        <WindowIcons />
      </TabStrip>

      <Toolbar>
        <NavButtons>
          <Glyph d={P.back} /><Glyph d={P.fwd} color="#7f8184" /><Glyph d={P.reload} />
        </NavButtons>
        <Omnibox>
          <Glyph d={P.lock} size={15} color="#9aa0a6" />
          <Url>
            <Fit w={750}><Host>makaut.com</Host>/papers/bca-5-sem-data-communication-and-computer-networks-bca-501-2017.pdf</Fit>
          </Url>
          <OmniActions><Share /><Glyph d={P.star} size={21} color="#c8cacc" /></OmniActions>
        </Omnibox>
        <ToolbarRight>
          <Glyph d={P.puzzle} size={21} />
          <Spacer $w={20} />
          <SidePanel />
          <Avatar>B</Avatar>
          <svg width="4" height="20" viewBox="0 0 4 20" fill="#f1f1f1"><circle cx="2" cy="3" r="2" /><circle cx="2" cy="10" r="2" /><circle cx="2" cy="17" r="2" /></svg>
        </ToolbarRight>
      </Toolbar>

      <Bookmarks>
        <Bookmark $gap={9} $next={21}><Gmail /><Fit w={38}>Gmail</Fit></Bookmark>
        <Bookmark $gap={10} $next={23}><YouTube /><Fit w={58}>YouTube</Fit></Bookmark>
        <Bookmark $gap={13} $next={0}><Maps /><Fit w={37}>Maps</Fit></Bookmark>
      </Bookmarks>

      <PdfBar>
        <Glyph d={P.menu} size={29} />
        <PdfTitle><Fit w={143}>Full page fax print</Fit></PdfTitle>
        <Field $w={29}>6</Field>
        <Slash>/</Slash>
        <Total><Fit w={9}>7</Fit></Total>
        <Rule $l={29} $r={16} />
        <Glyph d={P.remove} />
        <Spacer $w={15} />
        <Field $w={55}><Fit w={40}>100%</Fit></Field>
        <Spacer $w={15} />
        <Glyph d={P.add} />
        <Rule $l={15} $r={26} />
        <FitPage />
        <Spacer $w={21} />
        <Glyph d={P.rotate} size={24} />
        <PdfActions>
          <Glyph d={P.download} /><Glyph d={P.print} /><Glyph d={P.dots} />
        </PdfActions>
      </PdfBar>

      <PdfBody>
        <Sidebar>
          <ThumbPage n={3} /><ThumbPage n={4} /><ThumbPage n={5} /><ThumbPage n={6} on />
        </Sidebar>
        <Scroll before={284} len={373} />
        <Canvas>
          <PageShadow>
            <Page $h={682}>
              <DustLayer items={dust6} h={682} />
              <Questions>
                {items.map((q) => (
                  <Question key={q.last}>
                    <Marker>{q.mark}</Marker>
                    <Lines>
                      {q.lines.map((l) => <Line key={l}>{l}</Line>)}
                      <Line $short><span>{q.last}</span><span>4</span></Line>
                    </Lines>
                  </Question>
                ))}
              </Questions>
              <PageFoot><Fit w={81}>5/50123</Fit><span>6</span></PageFoot>
              <PageUrl $top={207} $left={19}><Fit w={208}>{SITE}</Fit></PageUrl>
            </Page>
          </PageShadow>
          <PageShadow>
            <Page $h={200}>
              <DustLayer items={dust7} h={114} />
              <PageUrl $top={30} $left={791}><Fit w={208}>{SITE}</Fit></PageUrl>
              <PageHeading><Fit w={436}>{HEAD}</Fit></PageHeading>
            </Page>
          </PageShadow>
        </Canvas>
        <Scroll before={611} len={67} />
      </PdfBody>

      <Taskbar>
        <Weather>
          <Moon />
          <WeatherText><Fit w={32}>26°C</Fit><Dim><Fit w={33}>Haze</Fit></Dim></WeatherText>
        </Weather>
        <WindowsLogo />
        <SearchBox><Magnifier /><Fit w={52}>Search</Fit></SearchBox>
        <Apps>
          <TaskView /><Chat /><Explorer /><McAfee /><Edge />
          <ActiveApp><Chrome /><ActiveBar /></ActiveApp>
        </Apps>
        <Tray>
          <TrayIcon $r={23}><TrayChevron /></TrayIcon>
          <TrayIcon $r={20}><Cloud /></TrayIcon>
          <TrayIcon $r={22}><Sync /></TrayIcon>
          <Language><Fit w={29}>ENG</Fit><Fit w={15}>IN</Fit></Language>
          <TrayIcon $r={10}><Wifi /></TrayIcon>
          <TrayIcon $r={10}><Volume /></TrayIcon>
          <Battery />
          <Clock><Fit w={36}>18:15</Fit><Fit w={78}>21-11-2023</Fit></Clock>
          <Badge>2</Badge>
        </Tray>
      </Taskbar>
    </Screen>
  );
}
